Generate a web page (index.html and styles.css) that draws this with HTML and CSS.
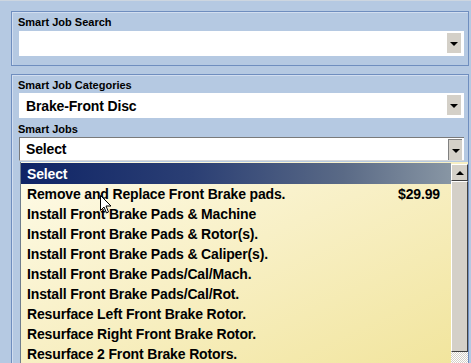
FILE: index.html
```html
<!DOCTYPE html>
<html lang="en">
<head>
  <meta charset="UTF-8" />
  <title>Smart Jobs</title>
  <link rel="stylesheet" href="styles.css">
</head>
<body>
  <div class="screen">

    <!-- Search group -->
    <div class="group group-search">
      <div class="label">Smart Job Search</div>
      <div class="combo">
        <span class="combo-text"></span>
        <span class="drop-btn"><span class="tri-down"></span></span>
      </div>
    </div>

    <!-- Categories group -->
    <div class="group group-cats">
      <div class="label">Smart Job Categories</div>
      <div class="combo">
        <span class="combo-text">Brake-Front Disc</span>
        <span class="drop-btn"><span class="tri-down"></span></span>
      </div>
      <div class="label label-jobs">Smart Jobs</div>
      <div class="combo combo-open">
        <span class="combo-text">Select</span>
        <span class="drop-btn sunken"><span class="tri-down"></span></span>
      </div>
    </div>

    <!-- Open dropdown list -->
    <div class="droplist">
      <div class="items">
        <div class="item selected">Select</div>
        <div class="item"><span>Remove and Replace Front Brake pads.</span><span class="price">$29.99</span></div>
        <div class="item">Install Front Brake Pads &amp; Machine</div>
        <div class="item">Install Front Brake Pads &amp; Rotor(s).</div>
        <div class="item">Install Front Brake Pads &amp; Caliper(s).</div>
        <div class="item">Install Front Brake Pads/Cal/Mach.</div>
        <div class="item">Install Front Brake Pads/Cal/Rot.</div>
        <div class="item">Resurface Left Front Brake Rotor.</div>
        <div class="item">Resurface Right Front Brake Rotor.</div>
        <div class="item">Resurface 2 Front Brake Rotors.</div>
      </div>
      <div class="scrollbar">
        <div class="sb-btn"><span class="tri-up"></span></div>
        <div class="sb-thumb"></div>
        <div class="sb-track"></div>
      </div>
    </div>

    <!-- mouse pointer -->
    <svg class="cursor" width="12" height="19" viewBox="0 0 12 19">
      <path d="M0.5 0.5 L0.5 15.5 L4 12 L6.5 18 L8.5 17 L6 11 L11 11 Z" fill="#fff" stroke="#000" stroke-width="1"/>
    </svg>
  </div>
</body>
</html>
```

FILE: styles.css
```css
* { box-sizing: border-box; }
body {
  margin: 0;
  font-family: "Liberation Sans", Arial, sans-serif;
  background: #b5c9e2;
  color: #000;
  overflow: hidden;
}
.screen {
  position: relative;
  width: 471px; height: 363px;
  border-top: 1px solid #cdd6e0;
  padding: 10px 2px 0 11px;
}
.group {
  border: 1px solid #6f8ebf;
  box-shadow: inset 1px 1px 0 #d2def0;
  padding: 2px 4px 0 6px;
}
.group-search { height: 55px; }
.group-cats {
  margin-top: 8px;
  height: 300px;
}
.label {
  font-size: 11px;
  font-weight: bold;
  height: 14px;
  line-height: 14px;
  padding-top: 1px;
}
.group-search .label { margin-bottom: 3px; }
.group-cats .label { margin-bottom: 2px; }
.label-jobs { margin-top: 3px; }
.combo {
  position: relative;
  display: flex;
  align-items: center;
  background: #fff;
  height: 25px;
  margin-left: 1px;
}
.combo-open {
  height: 24px;
  border-top: 1px solid #7a7a7a;
  border-left: 1px solid #7a7a7a;
  border-bottom: 1px solid #d8d8d8;
}
.combo-text {
  padding-left: 7px;
  font-size: 14px;
  letter-spacing: -0.15px;
  font-weight: bold;
}
.combo-open .combo-text { padding-left: 6px; }
.drop-btn {
  position: absolute;
  right: 3px; top: 2px; bottom: 3px;
  width: 14px;
  background: #d4d0c8;
  display: flex;
  align-items: center;
  justify-content: center;
}
.drop-btn.sunken {
  right: 2px; top: 1px; bottom: 0;
  border-top: 1px solid #808080;
  border-left: 1px solid #808080;
}
.tri-down {
  width: 0; height: 0;
  border-left: 4px solid transparent;
  border-right: 4px solid transparent;
  border-top: 4px solid #000;
  margin-top: 2px;
}
.tri-up {
  width: 0; height: 0;
  border-left: 4px solid transparent;
  border-right: 4px solid transparent;
  border-bottom: 4px solid #000;
}
/* dropdown list overlays the group */
.droplist {
  position: absolute;
  left: 20px; top: 161px;
  width: 448px; height: 210px;
  display: flex;
  border-left: 1px solid #6f7d8c;
  background: linear-gradient(to bottom right, #fefbe8 0%, #f8f0c6 45%, #f1e49a 100%);
}
.items { flex: 1; }
.item {
  display: flex;
  justify-content: space-between;
  align-items: center;
  height: 20px;
  padding: 0 11px 0 6px;
  font-size: 14px;
  letter-spacing: -0.15px;
  font-weight: bold;
  white-space: nowrap;
}
.item.selected {
  height: 21px;
  margin-top: 1px;
  color: #fff;
  background: linear-gradient(to right, #0f2466 0%, #2b3f74 40%, #5a6a86 75%, #8896a4 100%);
}
.scrollbar {
  width: 17px;
  margin-top: 2px;
  display: flex;
  flex-direction: column;
  background-color: #eeebe3;
  background-image: repeating-conic-gradient(#d4d0c8 0 25%, #ffffff 0 50%);
  background-size: 2px 2px;
}
.sb-btn {
  height: 17px;
  background: #d4d0c8;
  border: 1px solid;
  border-color: #fff #404040 #404040 #fff;
  display: flex;
  align-items: center;
  justify-content: center;
}
.sb-thumb {
  height: 171px;
  background: #d4d0c8;
  border: 1px solid;
  border-color: #fff #404040 #404040 #fff;
}
.sb-track { flex: 1; }
.cursor {
  position: absolute;
  left: 100px; top: 194px;
}
```
